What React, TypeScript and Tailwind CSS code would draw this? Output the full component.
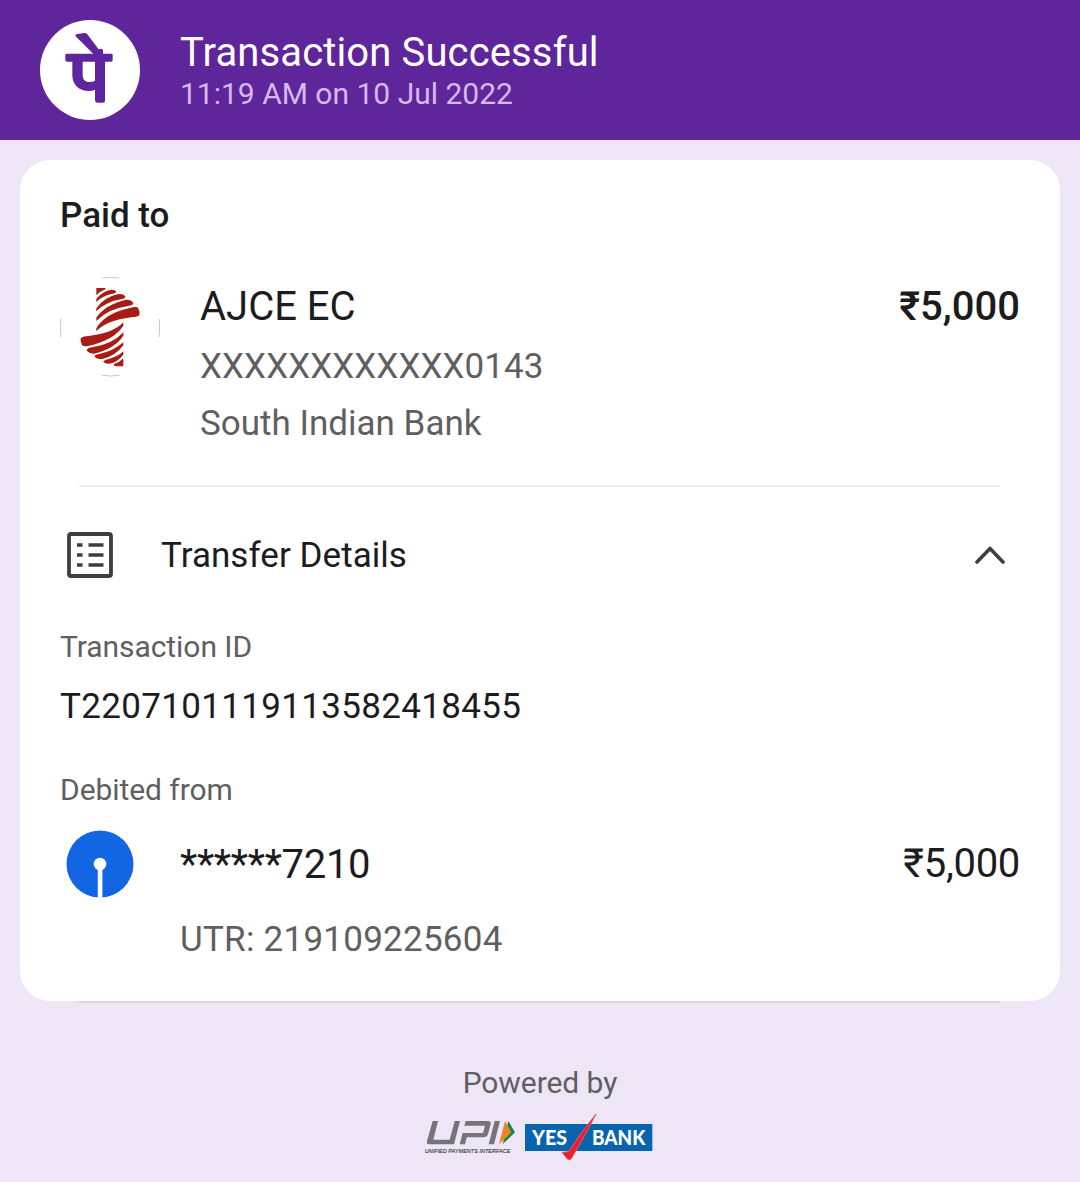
import type { ReactNode } from "react";

function PayLogo() {
  return (
    <svg className="size-[100px] shrink-0" viewBox="30 30 300 300">
      <circle cx="180" cy="180" r="150" fill="#fff" />
      <g fill="#5f259f">
        <path d="M137 79Q135 75 139 73L162 69Q168 68 172 73L206 118L214 116Q219 116 219 122V132H190Z" />
        <path d="M109 131H245Q248 131 248 134V150Q248 155 243 155H225V273Q225 278 219 278H202Q195 278 195 271V239Q187 243 177 243C146 243 127 224 127 195V155H112Q106 155 106 149V134Q106 131 109 131ZM158 155V194C158 209 165 216 179 216Q188 216 195 212V155Z" fillRule="evenodd" />
      </g>
    </svg>
  );
}

function SouthIndianLogo() {
  return (
    <svg className="size-[100px] shrink-0" viewBox="30 30 300 300">
      <g fill="none" stroke="#a9a9a9" strokeWidth="2">
        <path d="M157 33Q180 29 208 33M157 325Q180 329 208 325M33 155Q29 180 33 210M327 155Q331 180 327 210" />
      </g>
      <g fill="#a81c14">
        <path d="M139 63H164Q170 64 166 67Q148 74 139 85Z" />
        <path d="M139 105V95Q158 72 184 68Q198 68 199 76Q193 81 181 82Q156 88 139 105Z" />
        <path d="M139 133V124Q162 91 202 82Q219 79 226 88Q227 95 213 97Q168 104 139 133Z" />
        <path d="M139 162V152Q166 112 229 98Q245 97 250 109Q249 115 234 117Q174 125 139 162Z" />
        <path d="M139 193V184Q164 139 240 123Q259 117 264 122Q271 134 268 144Q264 150 244 151Q169 160 139 193Z" />
        <path d="M220 166V176Q194 218 117 236Q101 240 96 234Q90 222 92 214Q97 208 116 207Q189 199 220 166Z" />
        <path d="M220 196V206Q195 245 131 260Q116 260 110 250Q111 243 126 241Q187 232 220 196Z" />
        <path d="M220 226V235Q197 267 157 276Q141 278 134 270Q133 263 147 261Q191 252 220 226Z" />
        <path d="M220 253V263Q202 286 178 290Q162 291 160 283Q166 277 179 275Q203 269 220 253Z" />
        <path d="M220 274V298H199Q189 297 192 291Q209 286 220 274Z" />
      </g>
    </svg>
  );
}

function DetailsIcon() {
  return (
    <svg className="size-[50px] shrink-0" viewBox="0 0 50 50" fill="none" stroke="#3e3e40">
      <rect x="4" y="4" width="42" height="42" rx="2" strokeWidth="3.8" />
      <path d="M12 15H17.5M23.5 15H38.5M12 25H17.5M23.5 25H38.5M12 35H17.5M23.5 35H38.5" strokeWidth="3.6" />
    </svg>
  );
}

function SbiLogo() {
  return (
    <svg className="size-[80px] shrink-0" viewBox="0 0 80 80">
      <circle cx="40" cy="40" r="33.5" fill="#1266e3" />
      <circle cx="40" cy="40" r="6.3" fill="#fff" />
      <path d="M37.8 44H42.4V75H37.8Z" fill="#fff" />
    </svg>
  );
}

function UpiLogo() {
  return (
    <svg className="h-[65px] w-[105px] overflow-visible" viewBox="0 0 315 195">
      <g fill="#747479">
        <path d="M53 48H69L55 104H104L119 48H135L117 118H43Q33 118 36 108Z" />
        <path d="M152 48H218Q230 48 227 58L219 87Q216 97 205 97H155L150 118H134L143 84H204L210 62H148Z" />
        <path d="M239 48H255L237 118H221Z" />
      </g>
      <path d="M280 48L300 82L263 118Z" fill="#128a44" />
      <path d="M270 48L289 82L252 118Z" fill="#f08228" />
      <text x="29" y="143" fontFamily="Liberation Sans" fontStyle="italic" fontSize="18" fill="#333" stroke="#333" strokeWidth=".4" textLength="257" lengthAdjust="spacingAndGlyphs">UNIFIED PAYMENTS INTERFACE</text>
    </svg>
  );
}

function YesBankLogo() {
  return (
    <svg className="h-[65px] w-[145px]" viewBox="315 0 435 195">
      <rect x="330" y="57" width="382" height="81" fill="#0864ad" />
      <g fontFamily="Lato" fontWeight="900" fontSize="60" fill="#fff">
        <text x="351" y="119" textLength="105" lengthAdjust="spacingAndGlyphs">YES</text>
        <text x="531" y="119" textLength="160" lengthAdjust="spacingAndGlyphs">BANK</text>
      </g>
      <path d="M441 142L461 140Q497 82 543 27Q511 91 469 161Q463 168 457 162Z" fill="#e6202e" stroke="#e85a68" strokeWidth="3" />
    </svg>
  );
}

function Label({ children }: { children: ReactNode }) {
  return <div className="text-[30px] leading-[40px] tracking-[-0.06px] text-[#5f5f61]">{children}</div>;
}

export default function App() {
  return (
    <div className="h-[1182px] w-[1080px] overflow-hidden bg-[#eee5f7] font-['Roboto',sans-serif] text-[#1c1c1e] whitespace-nowrap">
      <header className="flex h-[140px] items-center bg-[#5f259b] pl-10">
        <PayLogo />
        <div className="ml-10 pt-[7px]">
          <h1 className="text-[40px] leading-[40px] tracking-[0.13px] text-white">Transaction Successful</h1>
          <p className="pt-[1px] text-[30px] leading-[40px] text-[#d6b9f0]">11:19 AM on 10 Jul 2022</p>
        </div>
      </header>
      <main className="mx-5 mt-5 h-[841px] rounded-[30px] bg-white px-10 pt-[36px]">
        <h2 className="text-[35px] leading-[40px] font-medium">Paid to</h2>
        <section className="mt-[41px] flex h-[175px]">
          <SouthIndianLogo />
          <div className="ml-10 grow">
            <div className="text-[40px] leading-[60px]">AJCE EC</div>
            <div className="text-[35px] leading-[60px] tracking-[0.1px] text-[#5f5f61]">XXXXXXXXXXXX0143</div>
            <div className="text-[35px] leading-[54px] text-[#5f5f61]">South Indian Bank</div>
          </div>
          <div className="text-[40px] leading-[60px] font-medium">₹5,000</div>
        </section>
        <hr className="mr-[20px] ml-[19px] mt-[33px] border-t-2 border-[#eeeeee]" />
        <section className="mt-[43px] flex h-[50px] items-center pl-[5px]">
          <DetailsIcon />
          <h3 className="ml-[46px] grow pt-[2px] text-[35px] leading-[50px] tracking-[0.05px]">Transfer Details</h3>
          <svg className="mr-[15px] h-5 w-[30px]" viewBox="0 0 30 20" fill="none" stroke="#3e3e40" strokeWidth="3.6" strokeLinecap="round" strokeLinejoin="round">
            <path d="M2 17L15 3.5L28 17" />
          </svg>
        </section>
        <section className="mt-[47px]">
          <Label>Transaction ID</Label>
          <div className="mt-[20px] text-[35px] leading-[40px] tracking-[0.33px]">T2207101119113582418455</div>
        </section>
        <section className="mt-[43px]">
          <Label>Debited from</Label>
          <div className="mt-[14px] flex h-[80px] items-center">
            <SbiLogo />
            <div className="ml-10 grow pt-[2px] text-[40px] leading-[80px] tracking-[-0.3px]">******7210</div>
            <div className="text-[40px] leading-[80px] tracking-[-0.3px]">₹5,000</div>
          </div>
          <div className="mt-[16px] ml-[120px] text-[35px] leading-[40px] tracking-[0.25px] text-[#5f5f61]">UTR: 219109225604</div>
        </section>
      </main>
      <hr className="mr-[80px] ml-[79px] border-t-2 border-[#dcd4e3]" />
      <footer className="flex flex-col items-center pt-[60px]">
        <Label>Powered by</Label>
        <div className="mt-[2px] flex w-[250px]">
          <UpiLogo />
          <YesBankLogo />
        </div>
      </footer>
    </div>
  );
}
